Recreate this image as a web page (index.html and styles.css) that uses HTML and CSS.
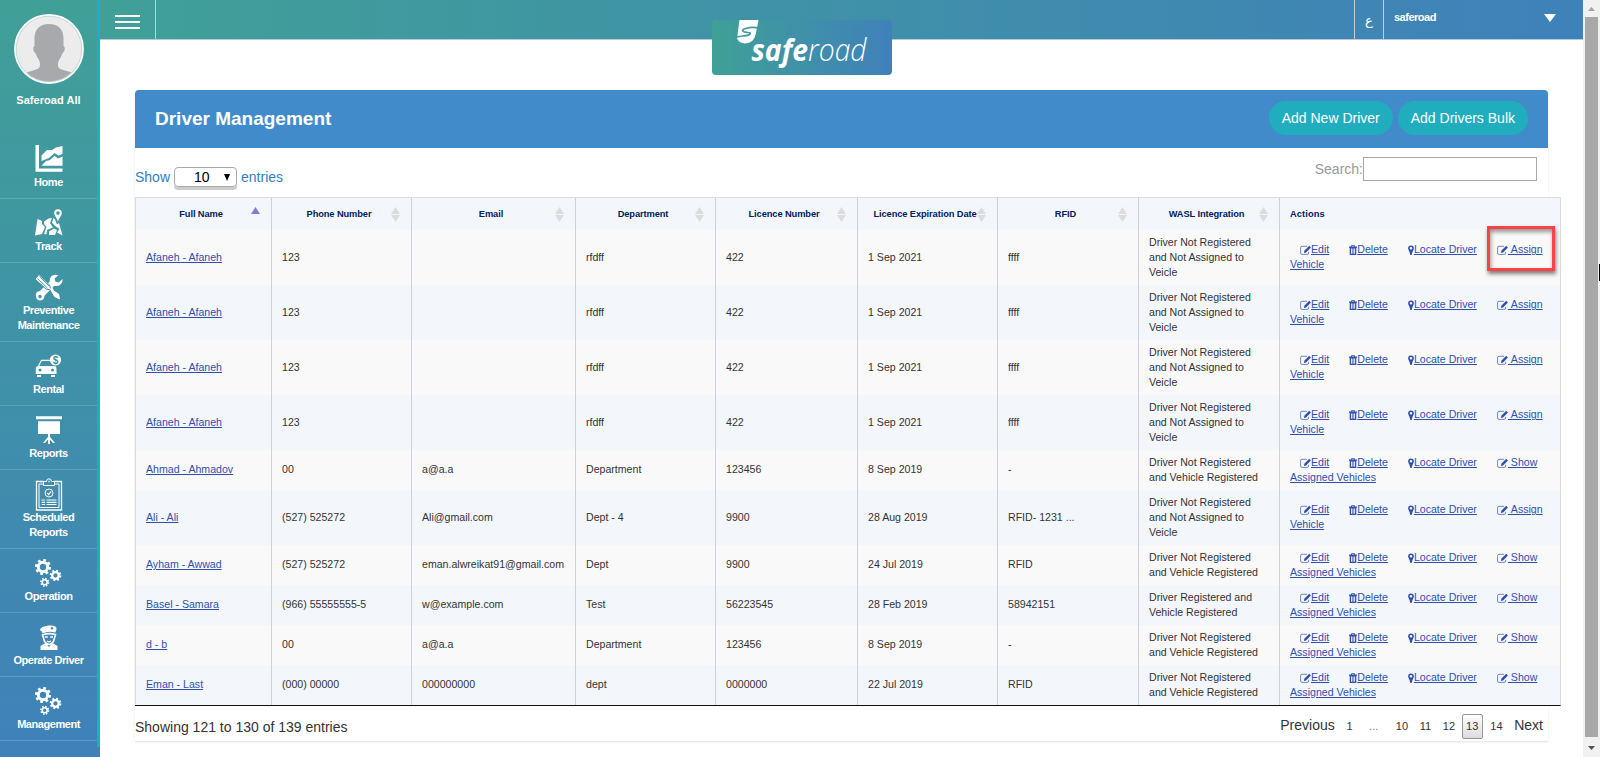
FILE: index.html
```html
<!DOCTYPE html>
<html lang="en">
<head>
<meta charset="utf-8">
<title>Driver Management</title>
<link rel="stylesheet" href="styles.css">
</head>
<body>
<svg class="defs" aria-hidden="true">
  <symbol id="edit" viewBox="0 0 11 10"><path d="M7 1.3H2Q.6 1.3 .6 2.7V8Q.6 9.4 2 9.4H7.2Q8.6 9.4 8.6 8V6.8" fill="none" stroke="currentColor" stroke-width=".9" opacity=".75"/><path d="M4 7.9L4.3 5.7 9.2.8 10.9 2.5 6.1 7.4z" fill="currentColor"/></symbol>
  <symbol id="trash" viewBox="0 0 8 10"><path d="M0 1.6H2.2V.2H5.8V1.6H8V2.8H7.3V10H.7V2.8H0zM3.1 1.6H4.9V1H3.1zM2 3.6V8.7H2.9V3.6zM3.6 3.6V8.7H4.500V3.6zM5.2 3.6V8.7H6.100V3.6z" fill="currentColor" fill-rule="evenodd"/></symbol>
  <symbol id="pin" viewBox="0 0 6 10"><path d="M3 .4A2.9 2.9 0 0 0 .1 3.3C.1 5 1.7 6.300 2.300 10H3.700C4.300 6.300 5.900 5 5.900 3.300A2.900 2.900 0 0 0 3 .4zM3 2A1.300 1.300 0 1 1 3 4.600 1.300 1.300 0 0 1 3 2z" fill="currentColor" fill-rule="evenodd"/></symbol>
  <symbol id="gears" viewBox="0 0 28 28"><g fill="none" stroke="#fff"><circle cx="8" cy="8" r="4.700" stroke-width="3"/><circle cx="8" cy="8" r="6.900" stroke-width="2.400" stroke-dasharray="2.700 2.720"/><circle cx="20.500" cy="16.500" r="3.300" stroke-width="2.300"/><circle cx="20.500" cy="16.500" r="4.900" stroke-width="1.900" stroke-dasharray="1.920 1.928"/><circle cx="9.700" cy="23.300" r="2.500" stroke-width="1.600"/><circle cx="9.700" cy="23.300" r="3.800" stroke-width="1.600" stroke-dasharray="1.490 1.495"/></g></symbol>
</svg>
<div class="app">
  <aside class="sidebar">
    <div class="rail">
      <svg class="avatar" viewBox="0 0 70 70"><defs><clipPath id="face"><circle cx="35" cy="35" r="32.500"/></clipPath></defs><circle cx="35" cy="35" r="34" fill="#ececec" stroke="#fff" stroke-width="1.800"/><circle cx="35" cy="35" r="32.800" fill="none" stroke="#9fcfca" stroke-width=".6"/><path clip-path="url(#face)" d="M35 10C25 10 20 16 20.500 26V32C18.500 33 19 38 21.500 39C23 44 26 46 26 50C26 55 24 55 19 56.500C14 58 12 58 9 61V70H61V61C58 58 56 58 51 56.500C46 55 44 55 44 50C44 46 47 44 48.500 39C51 38 51.500 33 49.500 32V26C50 16 45 10 35 10z" fill="#a7a9ac"/></svg>
      <div class="who">Saferoad All</div>
      <nav class="menu">
        <a class="item"><svg class="ico" viewBox="0 0 28 28"><path d="M.5 0H4V23.500H27.500V26.800H.5z" fill="#fff"/><path d="M6.500 10.500L12 5H17L21 2.500 27.500 1V9L23.500 10.500 19.500 8 14 13 6.500 16z" fill="#fff"/><path d="M6.500 20.800L11 16 15 15 19.500 10.800 23 13.500 27.500 11.500V20.800z" fill="#fff"/></svg><span>Home</span></a>
        <a class="item"><svg class="ico" viewBox="0 0 28 28"><path d="M2.500 10L7 12V15L10 18 7 25 0 26.500zM9 12.500L13.500 9.500 17 9 15 14 18 18.500 12 21 11.500 25.500 9 25 11.500 18 9 15zM18.500 9L20 10.500 22 15.500 24 14 27.500 26.500 22 23.500 24.500 20 19.500 16.500 17 13.500zM14 22.500L19 19.500 22 21 20 26 14 26z" fill="#fff"/><path d="M23 .3A3.800 3.800 0 0 0 19.200 4C19.200 7 22 8.500 23 13 24 8.500 26.800 7 26.800 4A3.800 3.800 0 0 0 23 .3zM23 2.300A1.800 1.800 0 1 1 23 5.900 1.800 1.800 0 0 1 23 2.300z" fill="#fff" fill-rule="evenodd"/></svg><span>Track</span></a>
        <a class="item"><svg class="ico" viewBox="0 0 28 28"><path d="M20.500 1.800Q14.500 2 14.800 8.500L4.500 18.300Q.5 18.500 .8 23 1.500 27.500 5.500 27.500 9.500 27 9.500 22.800L19 13Q27.500 14 27.700 6L23.500 9.500 20.500 8.700 19.500 5.500 23.500 2.300zM5 21.800A1.700 1.700 0 1 1 5 25.200 1.700 1.700 0 0 1 5 21.800z" fill="#fff" fill-rule="evenodd"/><path d="M0 6L4 1.500 14.500 12 16 17 11 16z" fill="#fff" stroke="#4097a2"/><path d="M2.500 5.500L12.500 15M4.800 3.700L14 13" stroke="#4097a2" stroke-width=".9"/><path d="M15.500 16L17 14.500 18.500 18 23.500 21 24.500 26 19.500 23.500z" fill="#fff" stroke="#fff"/></svg><span>Preventive<br>Maintenance</span></a>
        <a class="item"><svg class="ico" viewBox="0 0 28 28"><path d="M3.500 14L6.500 8.300H16" fill="none" stroke="#fff" stroke-width="1.200"/><path d="M3 14H19Q21.500 14 21.500 17V22H.8V17Q.8 14 3 14zM5 16.500A1.500 1.500 0 1 0 5 19.500 1.500 1.500 0 0 0 5 16.500zM17.500 16.500A1.500 1.500 0 1 0 17.500 19.500 1.500 1.500 0 0 0 17.500 16.500z" fill="#fff" fill-rule="evenodd"/><path d="M2 23H6V25H2zM16 23H20V25H16z" fill="#fff"/><circle cx="20.500" cy="8" r="5.600" fill="#fff"/><text x="20.500" y="11.700" class="coin">$</text></svg><span>Rental</span></a>
        <a class="item"><svg class="ico" viewBox="0 0 28 28"><path d="M1 .3H27V3.200H1zM3 5.200H25V18H3zM13 18H15V21L20 27H18L14.900 23.500V28H13.100V23.500L10 27H8L13 21z" fill="#fff"/></svg><span>Reports</span></a>
        <a class="item"><svg class="ico tall" viewBox="0 0 28 33"><g fill="none" stroke="#fff"><path d="M9 3.500H1.500V32H26.500V3.500H19" stroke-width="1.300"/><path d="M8 6H4V29.500H24V6H20M8.500 7.500V3.500H11.500Q11.500 .8 14 .8 16.500 .8 16.500 3.500H19.500V7.500z"/><circle cx="14" cy="15" r="4"/><path d="M12 15L13.500 16.700 16.200 13.500" stroke-width="1.200"/><path d="M6.500 22H10M11.500 22H21.500M6.500 24.300H10M11.500 24.300H21.500M6.500 26.500H10M11.500 26.500H21.500" stroke-width="1.200"/></g><circle cx="14" cy="3.500" r=".8" fill="#fff"/></svg><span>Scheduled<br>Reports</span></a>
        <a class="item"><svg class="ico"><use href="#gears"/></svg><span>Operation</span></a>
        <a class="item"><svg class="ico" viewBox="0 0 28 28"><path d="M5 6.500Q6 3.500 13.500 2.500 22 2 21.500 6L20.500 9.500Q13 7.500 7.500 10.500L7 8.500Q5 8 5 6.500z" fill="#fff"/><circle cx="17" cy="5.300" r="1.200" fill="#3f8bb0"/><path d="M7.500 12L8.500 15Q9.500 21 14 21.500 18.500 21 19.500 15L20.500 11.500Q14 9.500 7.500 12z" fill="none" stroke="#fff" stroke-width="1.600"/><path d="M10 14H12.800M15.200 14H18M12 18Q14 19.500 16 18" fill="none" stroke="#fff" stroke-width="1.300"/><path d="M10.500 20L14 24 17.500 20 22.500 23V27H5.500V23z" fill="#fff"/></svg><span>Operate Driver</span></a>
        <a class="item"><svg class="ico"><use href="#gears"/></svg><span>Management</span></a>
      </nav>
    </div>
  </aside>
  <main class="main">
    <header class="topbar">
      <div class="burger"><i></i><i></i><i></i></div>
      <div class="lang">ع</div>
      <div class="account"><span>saferoad</span><i class="caret"></i></div>
      <svg class="logo" viewBox="0 0 180 55"><path d="M27.500 0H46.500L44 13Q42 23.500 33 23.500 27 23 25 18.500z" fill="#fff"/><path d="M46.500 7.800C37 6.500 27 9.500 32 11.800 35 13 40.500 12 37.500 14.500 35 16.500 29 15.500 24.500 17" fill="none" stroke="#429aa0" stroke-width="1.700"/><text x="39.500" y="41" class="word-mark" textLength="115" lengthAdjust="spacingAndGlyphs">safe<tspan class="thin">road</tspan></text></svg>
    </header>
    <section class="panel">
      <div class="panel-head"><h1>Driver Management</h1><a class="btn">Add New Driver</a><a class="btn">Add Drivers Bulk</a></div>
      <div class="tools">
        <div class="length">Show <span class="select"><span>10</span><i></i></span> entries</div>
        <label class="search">Search:<input type="text"></label>
      </div>
      <table class="grid">
        <colgroup><col class="c1"><col class="c2"><col class="c3"><col class="c4"><col class="c5"><col class="c6"><col class="c7"><col class="c8"><col class="c9"></colgroup>
        <thead><tr><th class="asc">Full Name</th><th class="sort">Phone Number</th><th class="sort">Email</th><th class="sort">Department</th><th class="sort">Licence Number</th><th class="sort exp">Licence Expiration Date</th><th class="sort">RFID</th><th class="sort">WASL Integration</th><th class="acts">Actions</th></tr></thead>
        <tbody>
          <tr><td><a>Afaneh - Afaneh</a></td><td>123</td><td></td><td>rfdff</td><td>422</td><td>1 Sep 2021</td><td>ffff</td><td>Driver Not Registered<br>and Not Assigned to<br>Veicle</td><td class="actions"><a class="op"><svg class="e"><use href="#edit"/></svg>Edit</a><a class="op"><svg class="t"><use href="#trash"/></svg>Delete</a><a class="op"><svg class="p"><use href="#pin"/></svg>Locate Driver</a><a class="op"><svg class="e"><use href="#edit"/></svg>&nbsp;Assign<br>Vehicle</a><div class="mark"></div></td></tr>
          <tr><td><a>Afaneh - Afaneh</a></td><td>123</td><td></td><td>rfdff</td><td>422</td><td>1 Sep 2021</td><td>ffff</td><td>Driver Not Registered<br>and Not Assigned to<br>Veicle</td><td class="actions"><a class="op"><svg class="e"><use href="#edit"/></svg>Edit</a><a class="op"><svg class="t"><use href="#trash"/></svg>Delete</a><a class="op"><svg class="p"><use href="#pin"/></svg>Locate Driver</a><a class="op"><svg class="e"><use href="#edit"/></svg>&nbsp;Assign<br>Vehicle</a></td></tr>
          <tr><td><a>Afaneh - Afaneh</a></td><td>123</td><td></td><td>rfdff</td><td>422</td><td>1 Sep 2021</td><td>ffff</td><td>Driver Not Registered<br>and Not Assigned to<br>Veicle</td><td class="actions"><a class="op"><svg class="e"><use href="#edit"/></svg>Edit</a><a class="op"><svg class="t"><use href="#trash"/></svg>Delete</a><a class="op"><svg class="p"><use href="#pin"/></svg>Locate Driver</a><a class="op"><svg class="e"><use href="#edit"/></svg>&nbsp;Assign<br>Vehicle</a></td></tr>
          <tr><td><a>Afaneh - Afaneh</a></td><td>123</td><td></td><td>rfdff</td><td>422</td><td>1 Sep 2021</td><td>ffff</td><td>Driver Not Registered<br>and Not Assigned to<br>Veicle</td><td class="actions"><a class="op"><svg class="e"><use href="#edit"/></svg>Edit</a><a class="op"><svg class="t"><use href="#trash"/></svg>Delete</a><a class="op"><svg class="p"><use href="#pin"/></svg>Locate Driver</a><a class="op"><svg class="e"><use href="#edit"/></svg>&nbsp;Assign<br>Vehicle</a></td></tr>
          <tr><td><a>Ahmad - Ahmadov</a></td><td>00</td><td>a@a.a</td><td>Department</td><td>123456</td><td>8 Sep 2019</td><td>-</td><td>Driver Not Registered<br>and Vehicle Registered</td><td class="actions"><a class="op"><svg class="e"><use href="#edit"/></svg>Edit</a><a class="op"><svg class="t"><use href="#trash"/></svg>Delete</a><a class="op"><svg class="p"><use href="#pin"/></svg>Locate Driver</a><a class="op"><svg class="e"><use href="#edit"/></svg>&nbsp;Show<br>Assigned Vehicles</a></td></tr>
          <tr><td><a>Ali - Ali</a></td><td>(527) 525272</td><td>Ali@gmail.com</td><td>Dept - 4</td><td>9900</td><td>28 Aug 2019</td><td>RFID- 1231 ...</td><td>Driver Not Registered<br>and Not Assigned to<br>Veicle</td><td class="actions"><a class="op"><svg class="e"><use href="#edit"/></svg>Edit</a><a class="op"><svg class="t"><use href="#trash"/></svg>Delete</a><a class="op"><svg class="p"><use href="#pin"/></svg>Locate Driver</a><a class="op"><svg class="e"><use href="#edit"/></svg>&nbsp;Assign<br>Vehicle</a></td></tr>
          <tr><td><a>Ayham - Awwad</a></td><td>(527) 525272</td><td>eman.alwreikat91@gmail.com</td><td>Dept</td><td>9900</td><td>24 Jul 2019</td><td>RFID</td><td>Driver Not Registered<br>and Vehicle Registered</td><td class="actions"><a class="op"><svg class="e"><use href="#edit"/></svg>Edit</a><a class="op"><svg class="t"><use href="#trash"/></svg>Delete</a><a class="op"><svg class="p"><use href="#pin"/></svg>Locate Driver</a><a class="op"><svg class="e"><use href="#edit"/></svg>&nbsp;Show<br>Assigned Vehicles</a></td></tr>
          <tr><td><a>Basel - Samara</a></td><td>(966) 55555555-5</td><td>w@example.com</td><td>Test</td><td>56223545</td><td>28 Feb 2019</td><td>58942151</td><td>Driver Registered and<br>Vehicle Registered</td><td class="actions"><a class="op"><svg class="e"><use href="#edit"/></svg>Edit</a><a class="op"><svg class="t"><use href="#trash"/></svg>Delete</a><a class="op"><svg class="p"><use href="#pin"/></svg>Locate Driver</a><a class="op"><svg class="e"><use href="#edit"/></svg>&nbsp;Show<br>Assigned Vehicles</a></td></tr>
          <tr><td><a>d - b</a></td><td>00</td><td>a@a.a</td><td>Department</td><td>123456</td><td>8 Sep 2019</td><td>-</td><td>Driver Not Registered<br>and Vehicle Registered</td><td class="actions"><a class="op"><svg class="e"><use href="#edit"/></svg>Edit</a><a class="op"><svg class="t"><use href="#trash"/></svg>Delete</a><a class="op"><svg class="p"><use href="#pin"/></svg>Locate Driver</a><a class="op"><svg class="e"><use href="#edit"/></svg>&nbsp;Show<br>Assigned Vehicles</a></td></tr>
          <tr><td><a>Eman - Last</a></td><td>(000) 00000</td><td>000000000</td><td>dept</td><td>0000000</td><td>22 Jul 2019</td><td>RFID</td><td>Driver Not Registered<br>and Vehicle Registered</td><td class="actions"><a class="op"><svg class="e"><use href="#edit"/></svg>Edit</a><a class="op"><svg class="t"><use href="#trash"/></svg>Delete</a><a class="op"><svg class="p"><use href="#pin"/></svg>Locate Driver</a><a class="op"><svg class="e"><use href="#edit"/></svg>&nbsp;Show<br>Assigned Vehicles</a></td></tr>
        </tbody>
      </table>
      <footer class="foot">
        <div class="info">Showing 121 to 130 of 139 entries</div>
        <div class="pager"><a class="word prev">Previous</a><a>1</a><a class="dots">...</a><a>10</a><a>11</a><a>12</a><a class="on">13</a><a>14</a><a class="word next">Next</a></div>
      </footer>
    </section>
  </main>
  <div class="scroll"><i class="up"></i><div class="thumb"></div><i class="down"></i><b class="cursor"></b></div>
</div>
</body>
</html>
```
FILE: styles.css
```css
* { box-sizing: border-box; }
body { margin: 0; background: #fff; font-family: "Liberation Sans", Arial, sans-serif; font-size: 11px; color: #333; overflow: hidden; }
.defs { position: absolute; width: 0; height: 0; }
.app { display: flex; height: 757px; }

.sidebar { flex: 0 0 100px; background: linear-gradient(#40a097, #3f81ba); }
.rail { height: 747px; border-right: 3px solid #20adbe; padding-top: 14px; text-align: center; color: #fff; font-weight: bold; letter-spacing: -.45px; line-height: 15px; }
.avatar { display: block; width: 70px; height: 70px; margin-left: 14px; }
.who { margin-top: 9px; letter-spacing: .05px; }
.menu { padding-top: 27px; }
.item { display: block; padding: 10px 0 8px; border-bottom: 1px solid rgba(255,255,255,.17); }
.item span { display: block; }
.ico { display: block; width: 28px; height: 28px; margin: 0 0 2px 35px; overflow: visible; }
.ico.tall { height: 33px; margin: -2px 0 -1px 35px; }
.coin { font-size: 10px; fill: #4092a7; text-anchor: middle; letter-spacing: 0; }

.main { flex: 1; min-width: 0; }
.topbar { position: relative; display: flex; height: 40px; background: linear-gradient(90deg, #40a097, #3f81ba); border-bottom: 1px solid #b4cbdc; color: #fff; }
.burger { width: 56px; border-right: 1px solid #b9d3dc; padding: 15px 15px 0; display: flex; flex-direction: column; gap: 4px; }
.burger i { height: 2px; background: #fff; }
.lang { margin-left: auto; width: 30px; border: solid #b9cfe2; border-width: 0 1px; text-align: center; font: 13px/41px "DejaVu Sans", sans-serif; }
.account { width: 199px; display: flex; justify-content: space-between; padding: 10px 27px 0 10px; font-weight: bold; line-height: 15px; letter-spacing: -.5px; }
.caret { width: 12px; height: 8px; margin-top: 4px; background: #fff; clip-path: polygon(0 0, 100% 0, 50% 100%); }
.logo { position: absolute; left: 612px; top: 20px; width: 180px; height: 55px; border-radius: 4px; background: linear-gradient(90deg, #40a097, #3f81ba); }
.word-mark { font: italic bold 31px "Open Sans", sans-serif; fill: #fff; }
.thin { font-weight: 300; }

.panel { margin: 50px 35px 0; height: 651px; border-radius: 4px 4px 0 0; box-shadow: 0 1px 2px rgba(0,0,0,.12); }
.panel-head { height: 58px; background: #428bca; border-radius: 4px 4px 0 0; display: flex; align-items: center; gap: 5px; padding: 0 20px; color: #fff; }
.panel-head h1 { margin: 0 auto 1px 0; font-size: 19px; line-height: 24px; }
.btn { height: 34px; line-height: 34px; padding: 0 13px; border-radius: 17px; background: #20adbe; font-size: 14px; margin-bottom: 2px; }
.tools { height: 49px; display: flex; justify-content: space-between; font-size: 14px; }
.length { display: flex; gap: 4px; height: 20px; margin-top: 19px; line-height: 21px; color: #337ebe; }
.select { width: 63px; height: 20px; display: flex; justify-content: space-between; padding: 0 6px 0 19px; border: 1px solid #aaa; border-radius: 4px; box-shadow: 0 3px 0 #ccc; color: #000; line-height: 19px; }
.select i { width: 6px; height: 7px; margin-top: 6px; background: #000; clip-path: polygon(0 0, 100% 0, 50% 100%); }
.search { display: flex; margin: 9px 11px 0 0; height: 24px; line-height: 24px; color: #999; }
.search input { width: 174px; height: 24px; border: 1px solid #a9a9a9; padding: 0; }

.grid { width: 1426px; table-layout: fixed; border-collapse: separate; border-spacing: 0; border: solid #d8dbe0; border-width: 1px 1px 0 0; border-bottom: 1px solid #111; }
.c1 { width: 136px; } .c2 { width: 140px; } .c3 { width: 164px; } .c4 { width: 140px; } .c5 { width: 142px; } .c6 { width: 140px; } .c7, .c8 { width: 141px; } .c9 { width: 281px; }
.grid th { position: relative; height: 32px; padding: 0 18px 0 13px; background: #f3f7fc; border-left: 1px solid #ccd0de; font-size: 9.300px; font-weight: bold; color: #012060; line-height: 12px; white-space: nowrap; letter-spacing: -.1px; }
.grid th.acts { text-align: left; padding-left: 10px; letter-spacing: .1px; }
.sort::after, .asc::after { content: ""; position: absolute; right: 11px; top: 9px; width: 9px; height: 15px; background: linear-gradient(#dcdcdc 47%, #f3f7fc 47%, #f3f7fc 53%, #dcdcdc 53%); clip-path: polygon(0 47%, 50% 0, 100% 47%, 100% 53%, 50% 100%, 0 53%); }
.asc::after { height: 7px; background: #7b7fdb; clip-path: polygon(0 100%, 50% 0, 100% 100%); }
.grid td { padding: 4.700px 0 5.300px 10px; border-left: 1px solid #ccd0de; font-size: 10.600px; line-height: 15px; white-space: nowrap; }
.grid tr > :first-child { border-left-color: #d8dbe0; }
.grid tbody tr { height: 40px; background: #f3f7fc; }
.grid tbody tr:nth-child(odd) { background: #f9f9f9; }
.grid a { color: #2f4fae; text-decoration: underline; }
.actions { position: relative; }
.op { margin-left: 10px; }
.op + .op { margin-left: 20px; }
.op svg { height: 10px; vertical-align: -2px; }
.e { width: 11px; } .t { width: 8px; } .p { width: 6px; }
.mark { position: absolute; left: 207px; top: -4px; width: 68px; height: 45px; border: 3px solid #fb4244; box-shadow: 1px 3px 4px rgba(0,0,0,.5), inset 1px 3px 4px rgba(0,0,0,.4); }

.foot { display: flex; justify-content: space-between; height: 35px; padding-right: 5px; }
.info { font-size: 14px; line-height: 42px; }
.pager { display: flex; margin-top: 8px; height: 25px; line-height: 25px; }
.pager a { width: 23.500px; text-align: center; }
.pager .word { width: auto; font-size: 14px; line-height: 23px; }
.pager .prev { margin-right: 3px; }
.pager .dots { color: #777; width: 25px; margin-right: 4px; }
.pager .next { margin-left: 6px; }
.pager .on { width: 21px; margin: 0 2px 0 1px; line-height: 23px; border: 1px solid #979797; border-radius: 2px; background: linear-gradient(#fff, #dcdcdc); }

.scroll { position: relative; flex: 0 0 17px; background: #f1f1f1; padding: 7px 2px 0; display: flex; flex-direction: column; align-items: center; }
.up, .down { width: 7px; height: 4px; background: #a3a3a3; clip-path: polygon(50% 0, 100% 100%, 0 100%); }
.thumb { width: 13px; height: 720px; margin: 6px 0 9px; background: #a8a8a8; }
.down { background: #505050; clip-path: polygon(0 0, 100% 0, 50% 100%); }
.cursor { position: absolute; right: 0; top: 264px; width: 1px; height: 17px; background: #000; }
```
